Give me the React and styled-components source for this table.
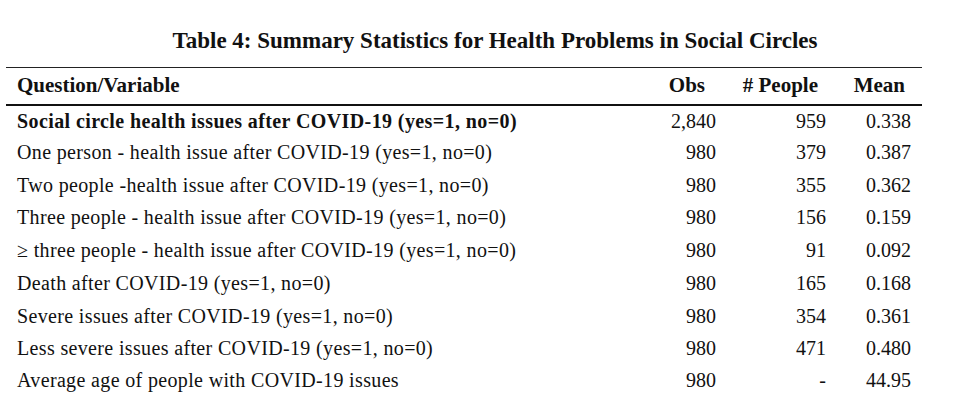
import React from 'react'
import styled, { createGlobalStyle } from 'styled-components'

const Global = createGlobalStyle`
  html, body {
    margin: 0;
    background: #fff;
  }
  body {
    font-family: "Liberation Serif", "Times New Roman", serif;
    color: #111;
  }
`

const rows = [
  { label: 'Social circle health issues after COVID-19 (yes=1, no=0)', obs: '2,840', people: '959', mean: '0.338', bold: true },
  { label: 'One person - health issue after COVID-19 (yes=1, no=0)', obs: '980', people: '379', mean: '0.387' },
  { label: 'Two people -health issue after COVID-19 (yes=1, no=0)', obs: '980', people: '355', mean: '0.362' },
  { label: 'Three people - health issue after COVID-19 (yes=1, no=0)', obs: '980', people: '156', mean: '0.159' },
  { label: '\u2265 three people - health issue after COVID-19 (yes=1, no=0)', obs: '980', people: '91', mean: '0.092', tall: true },
  { label: 'Death after COVID-19 (yes=1, no=0)', obs: '980', people: '165', mean: '0.168' },
  { label: 'Severe issues after COVID-19 (yes=1, no=0)', obs: '980', people: '354', mean: '0.361' },
  { label: 'Less severe issues after COVID-19 (yes=1, no=0)', obs: '980', people: '471', mean: '0.480' },
  { label: 'Average age of people with COVID-19 issues', obs: '980', people: '-', mean: '44.95' },
]

export default function App() {
  return (
    <>
      <Global />
      <Page>
        <Title>Table 4: Summary Statistics for Health Problems in Social Circles</Title>
        <Table>
          <thead>
            <HeadRow>
              <HeadLabel>Question/Variable</HeadLabel>
              <HeadCell $w={90} $pad={11}>Obs</HeadCell>
              <HeadCell $w={110} $pad={8}>
                # People
              </HeadCell>
              <HeadCell $w={96} $pad={17}>Mean</HeadCell>
            </HeadRow>
          </thead>
          <tbody>
            {rows.map((r) => (
              <Row key={r.label} $bold={r.bold} $tall={r.tall}>
                <Label $bold={r.bold}>{r.label}</Label>
                <Num $pad={0}>{r.obs}</Num>
                <Num $pad={0}>{r.people}</Num>
                <Num $pad={11}>{r.mean}</Num>
              </Row>
            ))}
          </tbody>
        </Table>
      </Page>
    </>
  )
}

const Page = styled.div`
  width: 956px;
  height: 403px;
  padding: 28px 0 0 6px;
  box-sizing: border-box;
  overflow: hidden;
`

const Title = styled.h1`
  margin: 0 0 13px;
  width: 916px;
  text-align: center;
  font-size: 23px;
  font-weight: bold;
  line-height: 26px;
  padding-left: 62px;
  box-sizing: border-box;
  white-space: nowrap;
`

const Table = styled.table`
  width: 916px;
  border-collapse: collapse;
  border-top: 1px solid #222;
  font-size: 20px;
`

const HeadRow = styled.tr`
  height: 37px;
  border-bottom: 2.5px solid #111;
  font-size: 21px;
`

const HeadLabel = styled.th`
  padding: 0 0 0 11px;
  text-align: left;
  font-weight: bold;
  white-space: nowrap;
`

const HeadCell = styled.th`
  width: ${(p) => p.$w}px;
  padding: 0 ${(p) => p.$pad}px 0 0;
  box-sizing: border-box;
  text-align: right;
  font-weight: bold;
  white-space: nowrap;
`

const Row = styled.tr`
  height: ${(p) => (p.$tall ? 34 : 32.3)}px;
`

const Label = styled.td`
  padding: 0 0 0 11px;
  text-align: left;
  white-space: nowrap;
  font-weight: ${(p) => (p.$bold ? 'bold' : 'normal')};
  letter-spacing: ${(p) => (p.$bold ? '0.4px' : '0.35px')};
`

const Num = styled.td`
  padding: 0 ${(p) => p.$pad}px 0 0;
  text-align: right;
  font-weight: normal;
`
